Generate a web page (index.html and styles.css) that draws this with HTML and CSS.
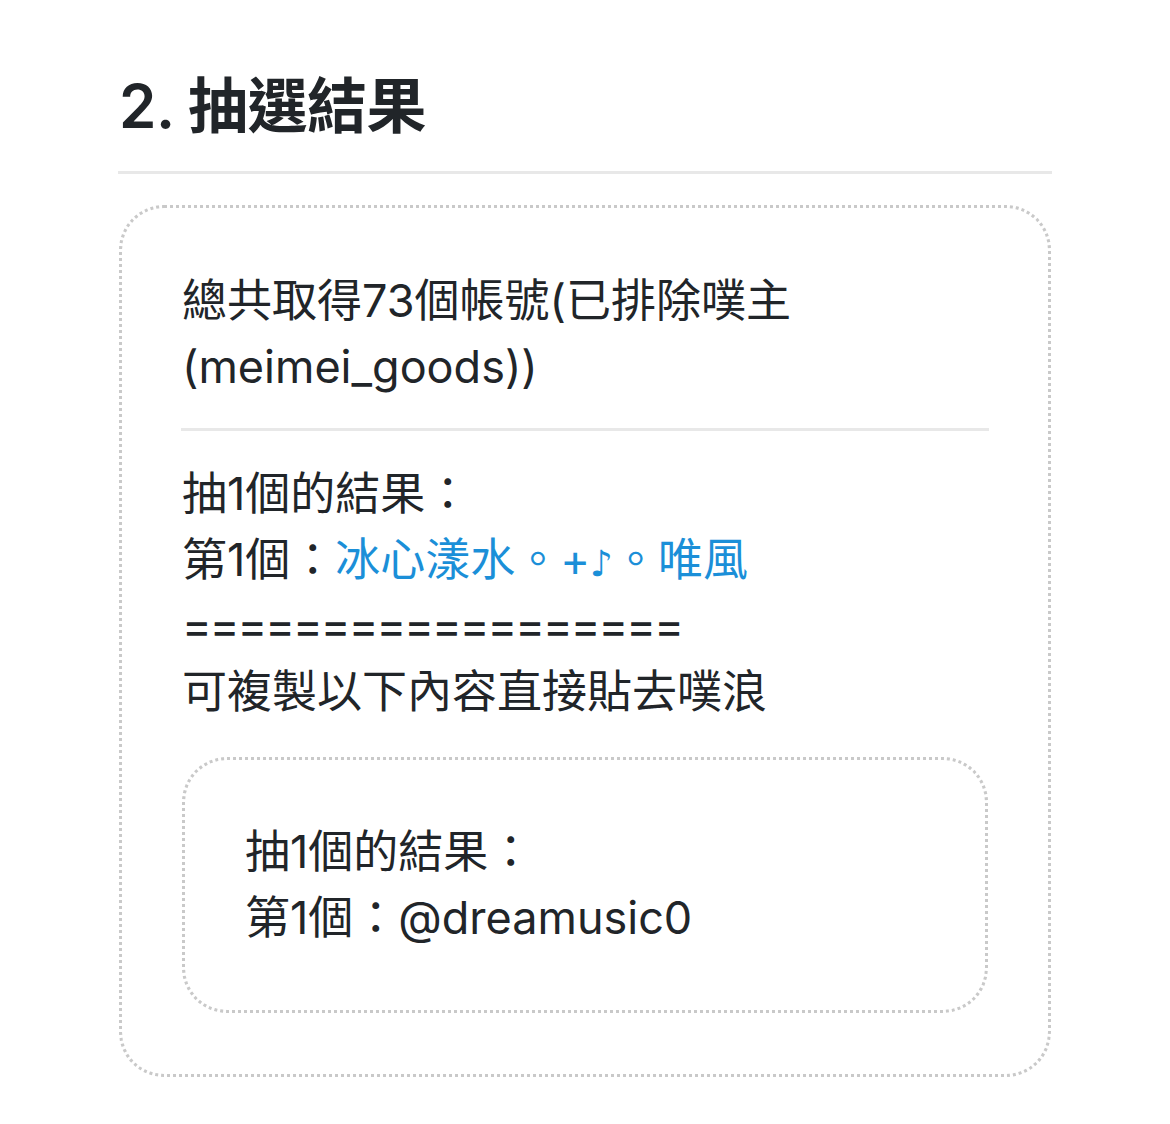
FILE: index.html
```html
<!DOCTYPE html>
<html lang="zh-Hant">
<head>
  <meta charset="UTF-8">
  <meta name="viewport" content="width=device-width, initial-scale=1.0">
  <title>抽選結果</title>
  <link rel="stylesheet" href="styles.css">
</head>
<body>

  <div class="container">
    <h2 class="titulo">2. 抽選結果</h2>
    <hr class="linha">

    <div class="caixa">
      <p class="info">總共取得73個帳號(已排除噗主(meimei_goods))</p>
      <hr class="linha-interna">

      <div class="resultado">
        <div>抽1個的結果：</div>
        <div>第1個：<a class="usuario" href="#">冰心漾水。+<span class="nota">♪</span>。唯風</a></div>
        <div class="separador">==================</div>
        <div>可複製以下內容直接貼去噗浪</div>
      </div>

      <div class="copiar">
        <div>抽1個的結果：</div>
        <div>第1個：@dreamusic0</div>
      </div>
    </div>
  </div>

</body>
</html>
```

FILE: styles.css
```css
body {
  font-family: Inter, "Noto Sans CJK TC", sans-serif;
  color: #212529;
  background-color: #fff;
  margin: 0;
}

.container {
  padding: 70px 118px 40px;
}

.titulo {
  font-size: 60px;
  font-weight: 600;
  line-height: 72px;
  letter-spacing: -0.5px;
  margin: 0 0 0 1px;
}

.linha {
  border: 0;
  border-top: 3px solid #e8e8e8;
  margin: 29px 0 31px;
}

.caixa {
  border: 3px dotted #c9c9c9;
  border-radius: 45px;
  padding: 60px 60px 61px;
  margin: 0 1px;
  font-size: 45px;
  line-height: 66px;
}

.info {
  margin: 0;
}

.linha-interna {
  border: 0;
  border-top: 3px solid #e8e8e8;
  margin: 28px -1px 30px;
}

.usuario {
  color: #1b8fd8;
  text-decoration: none;
}

.nota {
  font-family: "DejaVu Sans", sans-serif;
  font-size: 36px;
  line-height: 0;
}

.separador {
  letter-spacing: -2px;
}

.copiar {
  border: 3px dotted #c9c9c9;
  border-radius: 45px;
  padding: 59px 60px;
  margin-top: 32px;
}
```
